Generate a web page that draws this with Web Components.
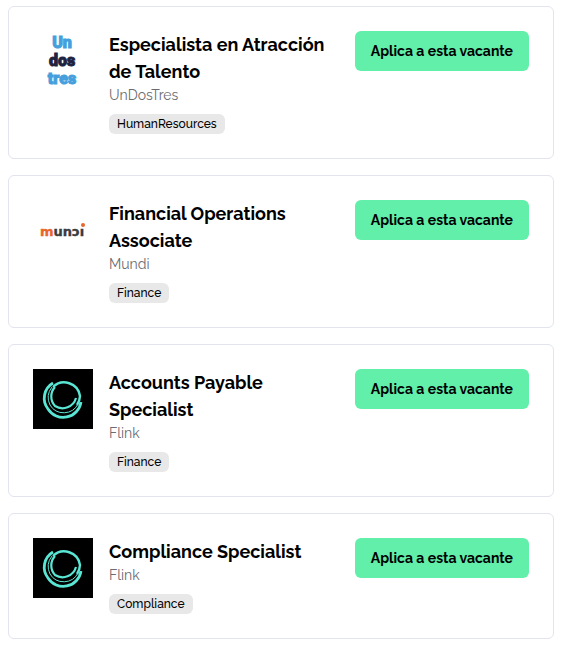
<!DOCTYPE html>
<html lang="es">
<head>
<meta charset="utf-8">
<meta name="viewport" content="width=device-width, initial-scale=1">
<title>Vacantes</title>
<style>
    body {
        margin: 6px 7px 8px 8px;
        background: #fff;
        color: #000;
        font-family: Raleway, Lato, "Open Sans", sans-serif;
    }
</style>
</head>
<body>

<job-list>
    <job-card data-company="UnDosTres" data-tag="HumanResources">
        <company-logo slot="logo" name="undostres"></company-logo>
        Especialista en Atracción de Talento
    </job-card>
    <job-card data-company="Mundi" data-tag="Finance">
        <company-logo slot="logo" name="mundi"></company-logo>
        Financial Operations Associate
    </job-card>
    <job-card data-company="Flink" data-tag="Finance">
        <company-logo slot="logo" name="flink"></company-logo>
        Accounts Payable Specialist
    </job-card>
    <job-card data-company="Flink" data-tag="Compliance">
        <company-logo slot="logo" name="flink"></company-logo>
        Compliance Specialist
    </job-card>
</job-list>

<script>
const createTemplate = html => {
    const template = document.createElement("template");
    template.innerHTML = html;
    return template;
};


// Logos
const logos = {
    undostres: /*html*/ `
<svg viewBox="0 0 60 60" role="img" aria-label="UnDosTres">
    <g font-family="Roboto, 'Liberation Sans', sans-serif" font-weight="900" font-size="16" text-anchor="middle" stroke-width="1">
        <text x="29" y="17" fill="#459fdc" stroke="#459fdc">Un</text>
        <text x="29" y="35" fill="#20233f" stroke="#20233f">dos</text>
        <text x="29" y="53" fill="#459fdc" stroke="#459fdc">tres</text>
    </g>
</svg>`,
    mundi: /*html*/ `
<svg viewBox="0 0 60 60" role="img" aria-label="Mundi">
    <g stroke-width="0.4">
        <text x="7" y="36" font-family="'DejaVu Sans', sans-serif" font-weight="700" font-size="13" fill="#3b3b40" stroke="#3b3b40"><tspan fill="#e8652b" stroke="#e8652b">m</tspan>unɔı</text>
    </g>
    <circle cx="50" cy="25" r="2" fill="#e8652b"/>
</svg>`,
    flink: /*html*/ `
<svg viewBox="0 0 60 60" role="img" aria-label="Flink">
    <rect width="60" height="60" fill="#000"/>
    <g fill="none" stroke="#5ae6d4">
        <path d="M20 18A16 16 0 0 1 47 27A17 17 0 0 1 44 36" stroke-width="2.4"/>
        <path d="M22 18A14 14 0 0 0 22 37A14 14 0 0 0 43 29" stroke-width="2.2"/>
        <path d="M20 14A17.600 17.600 0 0 0 15 40A18 18 0 0 0 48 33" stroke-width="2.8"/>
        <path d="M19 18A17 17 0 0 0 17 36A16 16 0 0 0 45 35" stroke-width="1"/>
    </g>
</svg>`,
};

const logo_template = createTemplate(/*html*/ `
<style>
    :host {
        display: block;
        width: 60px;
        height: 60px;
    }

    svg {
        display: block;
        width: 100%;
        height: 100%;
    }
</style>
`);

customElements.define("company-logo", class extends HTMLElement {

    constructor() {
        super();

        this.attachShadow({ mode: "open" });
        this.shadowRoot.append(logo_template.content.cloneNode(true));
        this.shadowRoot.append(createTemplate(logos[this.getAttribute("name")] ?? "").content);
    }

});


// Lista
const list_template = createTemplate(/*html*/ `
<style>
    :host {
        display: grid;
        gap: 16px;
    }
</style>

<slot></slot>
`);

customElements.define("job-list", class extends HTMLElement {

    constructor() {
        super();

        this.attachShadow({ mode: "open" });
        this.shadowRoot.append(list_template.content.cloneNode(true));
    }

});


// Botón
const button_template = createTemplate(/*html*/ `
<style>
    :host {
        display: block;
        flex-shrink: 0;
    }

    button {
        display: block;
        padding: 8px 16px;
        border: 0;
        border-radius: 6px;
        background: #61efa9;
        color: #000;
        font: inherit;
        font-size: 14px;
        font-weight: 700;
        line-height: 24px;
        white-space: nowrap;
        cursor: pointer;
    }

    button:hover {
        background: #4fe29a;
    }
</style>

<button type="button"><slot></slot></button>
`);

customElements.define("apply-button", class extends HTMLElement {

    constructor() {
        super();

        this.attachShadow({ mode: "open" });
        this.shadowRoot.append(button_template.content.cloneNode(true));
    }

});


// Tarjeta
const card_template = createTemplate(/*html*/ `
<style>
    :host {
        display: block;
        border: 1px solid #e2e4ee;
        border-radius: 6px;
        padding: 24px;
    }

    article {
        display: flex;
        align-items: flex-start;
        gap: 16px;
    }

    .info {
        flex: 1;
        min-width: 0;
    }

    h2 {
        margin: 0;
        font-size: 18px;
        font-weight: 700;
        line-height: 27px;
    }

    .company {
        margin: 0 0 8px;
        color: #6b6b70;
        font-size: 14px;
        font-weight: 400;
        line-height: 21px;
    }

    .tag {
        display: block;
        width: fit-content;
        padding: 0 8px;
        border-radius: 6px;
        background: #e8e8e8;
        font-size: 12px;
        font-weight: 500;
        line-height: 20px;
    }
</style>

<article>
    <slot name="logo"></slot>
    <div class="info">
        <h2><slot></slot></h2>
        <p class="company"></p>
        <span class="tag"></span>
    </div>
    <apply-button>Aplica a esta vacante</apply-button>
</article>
`);

customElements.define("job-card", class extends HTMLElement {

    static observedAttributes = ["data-company", "data-tag"];

    constructor() {
        super();

        this.attachShadow({ mode: "open" });
        this.shadowRoot.append(card_template.content.cloneNode(true));

        this._company = this.shadowRoot.querySelector(".company");
        this._tag = this.shadowRoot.querySelector(".tag");

        this.update();
    }

    attributeChangedCallback() {
        this.update();
    }

    update() {
        this._company.textContent = this.dataset["company"];
        this._tag.textContent = this.dataset["tag"];
    }

});
</script>
</body>
</html>
